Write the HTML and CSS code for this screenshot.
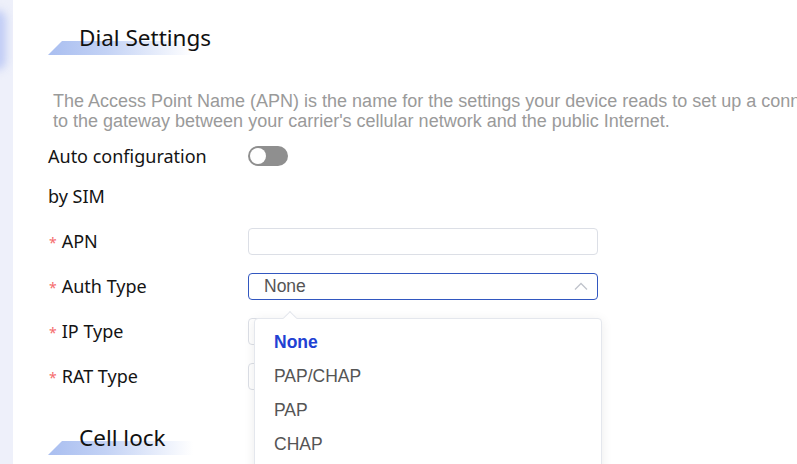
FILE: index.html
```html
<!DOCTYPE html>
<html lang="en">
<head>
<meta charset="utf-8">
<title>Dial Settings</title>
<link rel="stylesheet" href="styles.css">
</head>
<body>
<div class="layout">
  <aside class="side"><div class="side-glow"></div></aside>
  <main class="main">
    <h2 class="section-title"><span>Dial Settings</span></h2>
    <p class="desc">The Access Point Name (APN) is the name for the settings your device reads to set up a connection to the gateway between your carrier's cellular network and the public Internet.</p>
    <form class="form">
      <div class="row">
        <label class="label">Auto configuration by SIM</label>
        <div class="field"><span class="switch"><span class="knob"></span></span></div>
      </div>
      <div class="row">
        <label class="label"><span class="req">*</span>APN</label>
        <div class="field"><div class="input"></div></div>
      </div>
      <div class="row">
        <label class="label"><span class="req">*</span>Auth Type</label>
        <div class="field select-wrap">
          <div class="input select is-open">
            <span class="value">None</span>
            <svg class="chev" width="14" height="8" viewBox="0 0 14 8"><path d="M1 7.5 L7 1.5 L13 7.5" fill="none" stroke="#c0c4cc" stroke-width="1.3"/></svg>
          </div>
          <div class="dropdown">
            <span class="arrow"></span>
            <ul class="options">
              <li class="opt selected">None</li>
              <li class="opt">PAP/CHAP</li>
              <li class="opt">PAP</li>
              <li class="opt">CHAP</li>
            </ul>
          </div>
        </div>
      </div>
      <div class="row">
        <label class="label"><span class="req">*</span>IP Type</label>
        <div class="field"><div class="input"></div></div>
      </div>
      <div class="row">
        <label class="label"><span class="req">*</span>RAT Type</label>
        <div class="field"><div class="input"></div></div>
      </div>
    </form>
    <h2 class="section-title title-2"><span>Cell lock</span></h2>
  </main>
</div>
</body>
</html>
```
FILE: styles.css
```css
* { box-sizing: border-box; }
html, body { margin: 0; padding: 0; background: #fff; }
body { width: 797px; height: 464px; overflow: hidden; }

.layout { display: flex; height: 464px; overflow: hidden; }

.side {
  width: 13px;
  flex: none;
  background: #eef0fa;
  position: relative;
  overflow: hidden;
}
.side-glow {
  position: absolute;
  left: -12px;
  top: 10px;
  width: 18px;
  height: 60px;
  border-radius: 9px;
  background: #c0ccf5;
  filter: blur(4px);
}

.main {
  flex: 1;
  padding-left: 35px;
  padding-top: 23px;
  min-width: 0;
  overflow: hidden;
}

.section-title {
  position: relative;
  margin: 0;
  height: 30px;
  font-family: "Noto Sans", "Open Sans", sans-serif;
  font-weight: 400;
  font-size: 22.5px;
  line-height: 30px;
  color: #111;
}
.section-title::before {
  content: "";
  position: absolute;
  left: 0;
  top: 18px;
  width: 145px;
  height: 14px;
  background: linear-gradient(90deg, #a9bef0 0%, #c3d2f5 40%, rgba(255,255,255,0) 100%);
  clip-path: polygon(14px 0, 100% 0, 100% 100%, 0 100%);
}
.section-title span {
  position: relative;
  margin-left: 31px;
}

.desc {
  margin: 38px 0 0 5px;
  width: 800px;
  font-family: "Liberation Sans", Arial, sans-serif;
  font-size: 18px;
  line-height: 20px;
  color: #9a9a9a;
}

.form { margin: 5px 0 0 0; }

.row {
  display: flex;
  align-items: flex-start;
  margin-bottom: 5px;
}
.label {
  width: 200px;
  flex: none;
  padding-right: 30px;
  font-family: "Noto Sans", "Open Sans", sans-serif;
  font-size: 18px;
  line-height: 40px;
  color: #141414;
}
.req {
  color: #f56c6c;
  font-size: 14px;
  line-height: 1;
  margin-right: 5px;
  margin-left: 1px;
}
.field {
  width: 350px;
  height: 40px;
  display: flex;
  align-items: center;
  position: relative;
}

.switch {
  width: 40px;
  height: 20px;
  border-radius: 10px;
  background: #8f8f8f;
  position: relative;
  display: block;
}
.knob {
  position: absolute;
  left: 2px;
  top: 2px;
  width: 16px;
  height: 16px;
  border-radius: 50%;
  background: #fff;
}

.input {
  width: 350px;
  height: 27px;
  border: 1px solid #dcdfe6;
  border-radius: 4px;
  background: #fff;
}
.select {
  border-color: #3257c0;
  display: flex;
  align-items: center;
  justify-content: space-between;
  padding: 0 9px 0 15px;
}
.select .value {
  font-family: "Liberation Sans", Arial, sans-serif;
  font-size: 17.5px;
  color: #555;
}

.dropdown {
  position: absolute;
  left: 6px;
  top: 52px;
  width: 348px;
  height: 170px;
  background: #fff;
  border: 1px solid #e4e7ed;
  border-radius: 4px;
  box-shadow: 0 2px 12px rgba(0,0,0,0.08);
  z-index: 5;
}
.arrow {
  position: absolute;
  top: -6px;
  left: 30px;
  width: 10px;
  height: 10px;
  background: #fff;
  border-left: 1px solid #e4e7ed;
  border-top: 1px solid #e4e7ed;
  transform: rotate(45deg);
}
.options {
  list-style: none;
  margin: 0;
  padding: 6px 0;
}
.opt {
  height: 34px;
  line-height: 34px;
  padding-left: 19px;
  font-family: "Liberation Sans", Arial, sans-serif;
  font-size: 17.5px;
  color: #555;
}
.opt.selected {
  color: #2241d3;
  font-weight: 700;
}

.title-2 { margin-top: 27px; }
```
